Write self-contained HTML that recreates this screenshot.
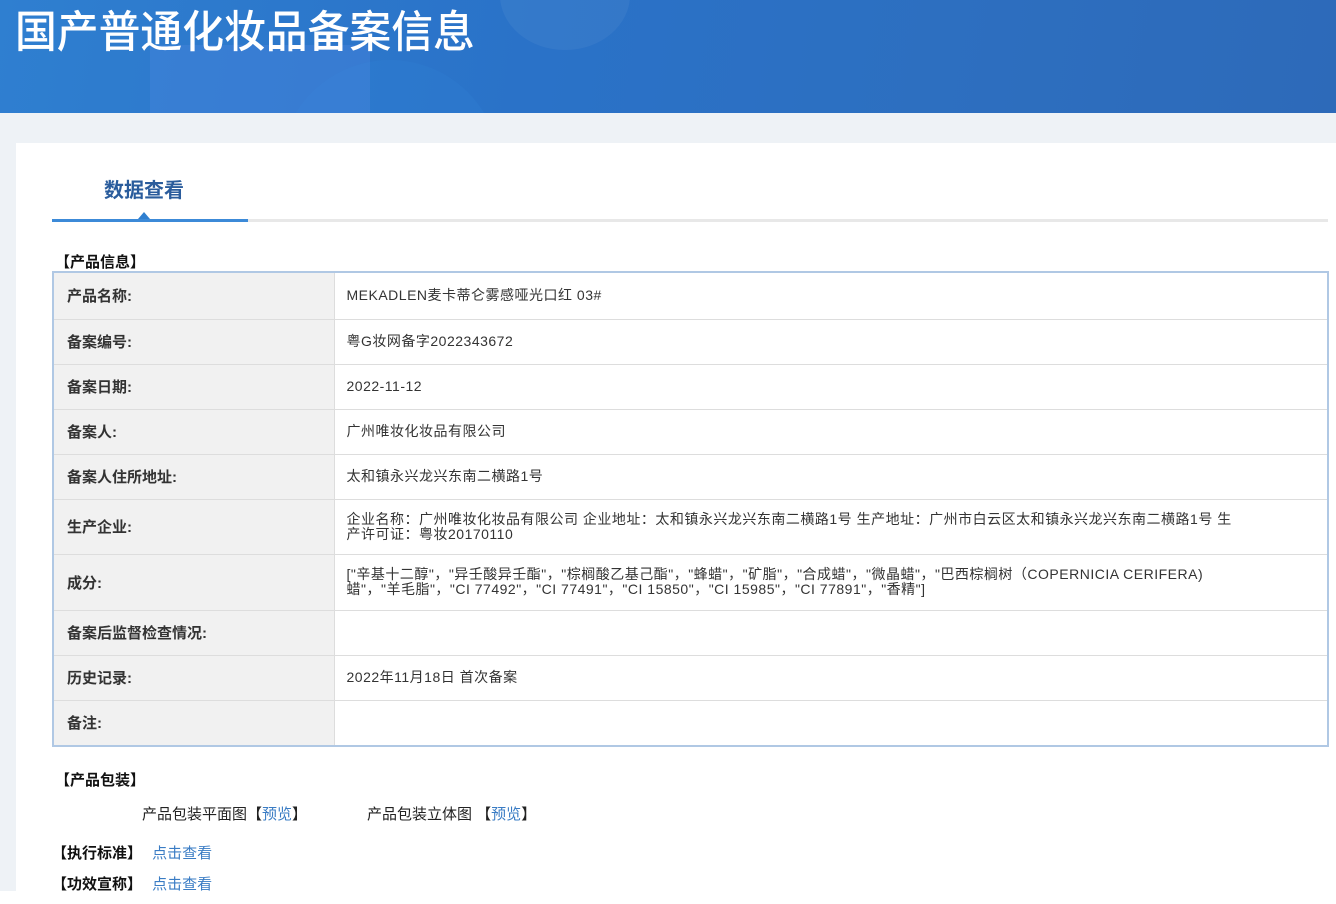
<!DOCTYPE html>
<html><head><meta charset="utf-8"><style>
*{margin:0;padding:0;box-sizing:border-box}
body{width:1336px;height:904px;overflow:hidden;background:#fff;font-family:"Liberation Sans","Noto Sans CJK SC",sans-serif;color:#333;position:relative}
.hdr{position:absolute;left:0;top:0;width:1336px;height:113px;background:linear-gradient(100deg,#2f7fd0 0%,#2a72c8 40%,#2d6fc0 70%,#2d6ab9 100%);overflow:hidden}
.hdr .b2{position:absolute;left:150px;top:45px;width:220px;height:70px;background:rgba(90,140,230,.25)}
.hdr .c1{position:absolute;left:280px;top:60px;width:220px;height:220px;border-radius:50%;background:rgba(60,150,230,.12)}
.hdr .c2{position:absolute;left:500px;top:-60px;width:130px;height:110px;border-radius:50%;background:rgba(255,255,255,.05)}
.hdr h1{position:absolute;left:15px;top:-4px;font-size:44px;font-weight:500;color:#fff;font-family:"Noto Sans CJK SC",sans-serif;transform:scaleX(.95);transform-origin:left}
.gray{position:absolute;left:0;top:113px;width:1336px;height:778px;background:#eef2f6}
.panel{position:absolute;left:16px;top:143px;width:1320px;height:748px;background:#fff}
.tab{position:absolute;left:104px;top:174px;font-size:20px;font-weight:bold;color:#2a5c9c}
.line{position:absolute;left:52px;top:219px;width:1276px;height:3px;background:#e8e8e8}
.line i{position:absolute;left:0;top:0;width:196px;height:3px;background:#3c8ad8}
.tri{position:absolute;left:138px;top:212px;width:0;height:0;border-left:6px solid transparent;border-right:6px solid transparent;border-bottom:7px solid #2f7fd0}
.sec{position:absolute;font-size:15px;font-weight:bold;color:#111}
table{position:absolute;left:52px;top:271px;width:1277px;border-collapse:collapse;border:2px solid #b0c8e4;font-size:14px}
td{border:1px solid #ddd;vertical-align:middle}
td.l{width:281px;background:#f1f1f1;font-weight:bold;font-size:15px;padding-left:13px;color:#333}
td.v{padding:0 12px;color:#333;line-height:15px;white-space:nowrap;letter-spacing:0.5px}
a{color:#3a7cc4;text-decoration:none}
.t{position:absolute;font-size:15px;color:#222}
</style></head><body>
<div class="hdr"><div class="c2"></div><div class="b2"></div><div class="c1"></div><h1>国产普通化妆品备案信息</h1></div>
<div class="gray"></div>
<div class="panel"></div>
<div class="tab">数据查看</div>
<div class="line"><i></i></div>
<div class="tri"></div>
<div class="sec" style="left:55px;top:251px">【产品信息】</div>
<table>
<tr style="height:47px"><td class="l">产品名称:</td><td class="v">MEKADLEN麦卡蒂仑雾感哑光口红 03#</td></tr>
<tr style="height:45px"><td class="l">备案编号:</td><td class="v">粤G妆网备字2022343672</td></tr>
<tr style="height:45px"><td class="l">备案日期:</td><td class="v">2022-11-12</td></tr>
<tr style="height:45px"><td class="l">备案人:</td><td class="v">广州唯妆化妆品有限公司</td></tr>
<tr style="height:45px"><td class="l">备案人住所地址:</td><td class="v">太和镇永兴龙兴东南二横路1号</td></tr>
<tr style="height:55px"><td class="l">生产企业:</td><td class="v">企业名称：广州唯妆化妆品有限公司 企业地址：太和镇永兴龙兴东南二横路1号 生产地址：广州市白云区太和镇永兴龙兴东南二横路1号 生<br>产许可证：粤妆20170110</td></tr>
<tr style="height:56px"><td class="l">成分:</td><td class="v">["辛基十二醇"，"异壬酸异壬酯"，"棕榈酸乙基己酯"，"蜂蜡"，"矿脂"，"合成蜡"，"微晶蜡"，"巴西棕榈树（COPERNICIA CERIFERA)<br>蜡"，"羊毛脂"，"CI 77492"，"CI 77491"，"CI 15850"，"CI 15985"，"CI 77891"，"香精"]</td></tr>
<tr style="height:45px"><td class="l">备案后监督检查情况:</td><td class="v"></td></tr>
<tr style="height:45px"><td class="l">历史记录:</td><td class="v">2022年11月18日 首次备案</td></tr>
<tr style="height:46px"><td class="l">备注:</td><td class="v"></td></tr>
</table>
<div class="sec" style="left:55px;top:769px">【产品包装】</div>
<div class="t" style="left:142px;top:803px">产品包装平面图【<a>预览</a>】</div>
<div class="t" style="left:367px;top:803px">产品包装立体图 【<a>预览</a>】</div>
<div class="sec" style="left:52px;top:842px">【执行标准】 <a style="font-weight:normal;margin-left:6px">点击查看</a></div>
<div class="sec" style="left:52px;top:873px">【功效宣称】 <a style="font-weight:normal;margin-left:6px">点击查看</a></div>
</body></html>
